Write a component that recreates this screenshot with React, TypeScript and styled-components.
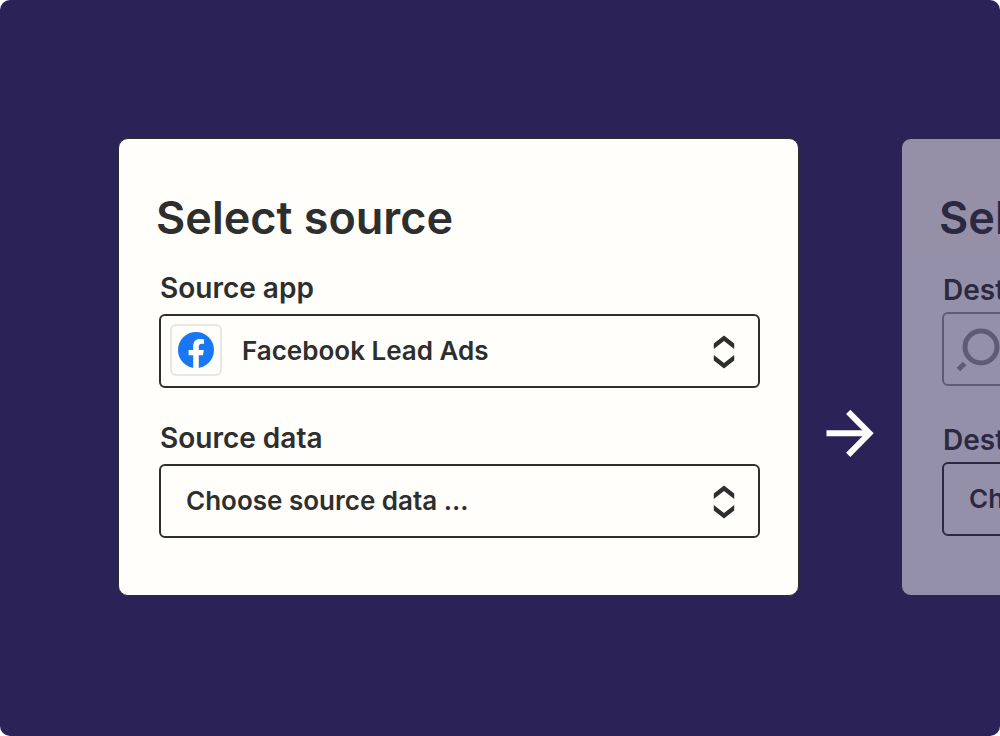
import React, { useId } from "react";
import styled, { createGlobalStyle } from "styled-components";

const ink = "#2d2e2e";
const paper = "#fffefa";
const night = "#2b2257";

const GlobalStyle = createGlobalStyle`
  *, *::before, *::after { box-sizing: border-box; }
  body {
    margin: 0;
    background: #ffffff;
    color: ${ink};
    font-family: Inter, "Liberation Sans", sans-serif;
  }
`;

const Stage = styled.main`
  display: grid;
  grid-template-columns: calc(100vw - 319px) 102px calc(100vw - 319px);
  align-content: start;
  min-height: 100vh;
  padding: 138px 0 140px 118px;
  overflow: hidden;
  border-radius: 10px;
  background: ${night};
`;

const Card = styled.section<{ $dimmed?: boolean }>`
  display: flex;
  flex-direction: column;
  padding: 47px 38px 57px 40px;
  border: 1px solid ${ink};
  border-radius: 10px;
  background: ${paper};
  opacity: ${({ $dimmed }) => ($dimmed ? 0.5 : 1)};
`;

const Title = styled.h1`
  margin: 0 0 0 -3px;
  font-size: 45px;
  line-height: 64px;
  font-weight: 600;
  white-space: nowrap;
`;

const Fields = styled.div<{ $tight?: boolean }>`
  display: flex;
  flex-direction: column;
  gap: ${({ $tight }) => ($tight ? "37px" : "33px")};
  padding-top: ${({ $tight }) => ($tight ? "23px" : "21px")};
`;

const Field = styled.div<{ $tight?: boolean }>`
  display: flex;
  flex-direction: column;
  gap: ${({ $tight }) => ($tight ? "5px" : "9px")};
`;

const Label = styled.label`
  padding-left: 1px;
  font-size: 28px;
  line-height: 34px;
  font-weight: 600;
  white-space: nowrap;
`;

const Control = styled.div<{ $muted?: boolean }>`
  display: grid;
  grid-template-columns: minmax(0, 1fr);
  align-items: center;
  opacity: ${({ $muted }) => ($muted ? 0.5 : 1)};
  & > * { grid-area: 1 / 1; }
`;

const Select = styled.select<{ $withIcon?: boolean }>`
  appearance: none;
  width: 100%;
  height: 74px;
  margin: 0;
  padding: 0 64px 2px ${({ $withIcon }) => ($withIcon ? "81px" : "25px")};
  border: 2px solid ${ink};
  border-radius: 6px;
  background: transparent;
  color: ${ink};
  font-family: inherit;
  font-size: 26px;
  font-weight: 600;
  opacity: 1;
`;

const AppTile = styled.span`
  display: grid;
  place-items: center;
  width: 52px;
  height: 52px;
  margin: 0 0 2px 11px;
  border: 2px solid #e8e7e4;
  border-radius: 6px;
  pointer-events: none;
`;

const SearchSlot = styled.span`
  display: grid;
  margin-left: 16px;
  pointer-events: none;
`;

const ChevronSlot = styled.span`
  display: grid;
  justify-self: end;
  margin: 2px 25px 0 0;
  pointer-events: none;
`;

const ArrowSlot = styled.div`
  display: grid;
  justify-content: center;
  align-self: start;
  padding-top: 271px;
`;

const GlassDrawing = styled.svg`
  overflow: visible;
`;

const Chevrons = () => (
  <svg width="22" height="34" viewBox="0 0 22 34" fill={ink} aria-hidden="true">
    <path d="M11 0.6 21.2 8.4V14L11 5.9 0.8 14V8.4Z" />
    <path d="M11 33.4 21.2 25.6V20L11 28.1 0.8 20V25.6Z" />
  </svg>
);

const FacebookLogo = () => (
  <svg width="36" height="36" viewBox="0 0 36 36" aria-hidden="true">
    <circle cx="18" cy="18" r="18" fill="#1877f2" />
    <path
      fill={paper}
      d="M25 23.2 25.8 18H20.8V14.6C20.8 13.2 21.5 11.8 23.7 11.8H26V7.4S23.9 7 22 7C17.9 7 15.2 9.5 15.2 14V18H10.6V23.2H15.2V35.8A18 18 0 0 0 20.8 35.8V23.2Z"
    />
  </svg>
);

const SearchGlass = () => (
  <GlassDrawing width="44" height="46" viewBox="0 0 44 46" fill="none" stroke={ink} strokeWidth="5" aria-hidden="true">
    <circle cx="23" cy="21" r="16" />
    <path d="M0.4 43.6 6.6 37.4" />
  </GlassDrawing>
);

const Arrow = () => (
  <svg width="48" height="48" viewBox="0 0 48 48" fill="none" stroke={paper} strokeWidth="6" aria-hidden="true">
    <path d="M0.5 24.3H43" />
    <path d="M22.2 2.8 43.5 24.3 22.2 45.8" />
  </svg>
);

type PickerProps = {
  label: string;
  value: string;
  icon?: React.ReactNode;
  muted?: boolean;
  tight?: boolean;
};

function Picker({ label, value, icon, muted, tight }: PickerProps) {
  const id = useId();
  return (
    <Field $tight={tight}>
      <Label htmlFor={id}>{label}</Label>
      <Control $muted={muted}>
        <Select id={id} $withIcon={Boolean(icon)}>
          <option>{value}</option>
        </Select>
        {icon}
        <ChevronSlot><Chevrons /></ChevronSlot>
      </Control>
    </Field>
  );
}

export default function App() {
  return (
    <>
      <GlobalStyle />
      <Stage>
        <Card>
          <Title>Select source</Title>
          <Fields>
            <Picker
              label="Source app"
              value="Facebook Lead Ads"
              icon={<AppTile><FacebookLogo /></AppTile>}
            />
            <Picker label="Source data" value="Choose source data ..." />
          </Fields>
        </Card>
        <ArrowSlot><Arrow /></ArrowSlot>
        <Card $dimmed>
          <Title as="h2">Select destination</Title>
          <Fields $tight>
            <Picker
              label="Destination app"
              value="Search"
              icon={<SearchSlot><SearchGlass /></SearchSlot>}
              muted
              tight
            />
            <Picker label="Destination data" value="Choose destination data ..." tight />
          </Fields>
        </Card>
      </Stage>
    </>
  );
}
